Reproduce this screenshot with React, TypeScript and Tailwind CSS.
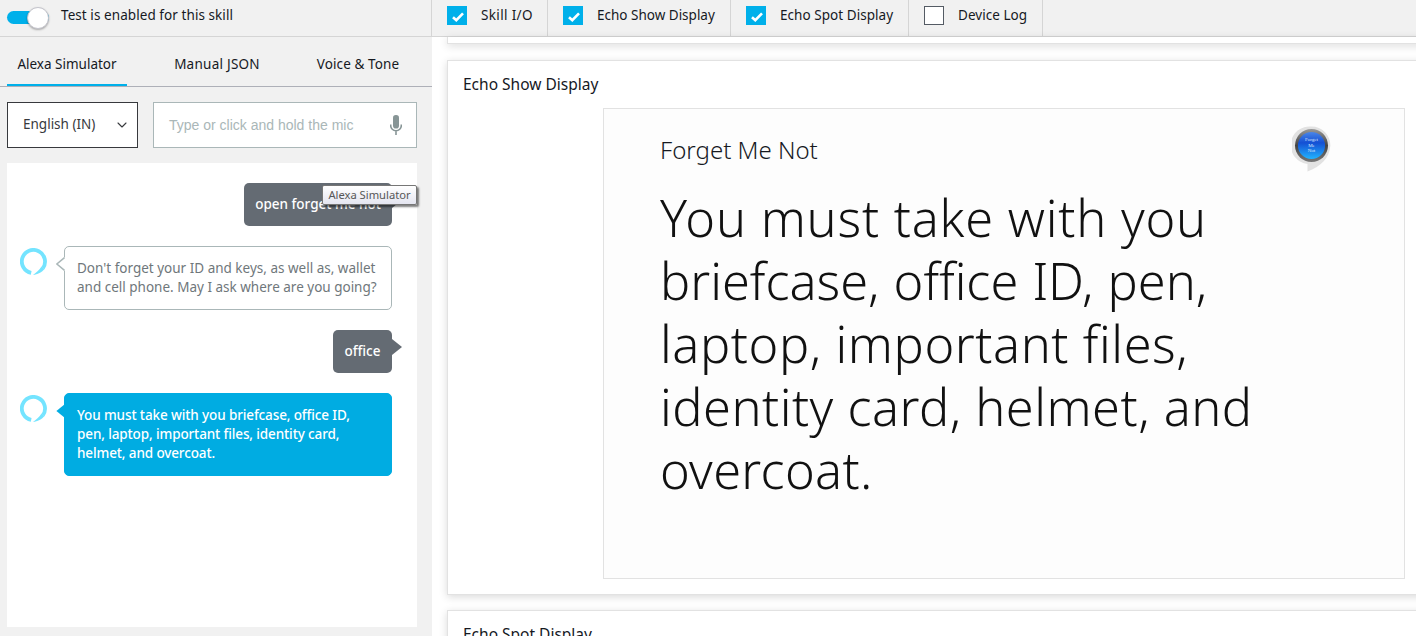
import type { ReactNode } from 'react'
import { ChevronDown } from 'lucide-react'

const panels = [
  { label: 'Skill I/O', checked: true, cell: 'w-[116px]', text: 'tracking-[0.35px]' },
  { label: 'Echo Show Display', checked: true, cell: 'w-[183px]', text: '' },
  { label: 'Echo Spot Display', checked: true, cell: 'w-[178px]', text: 'tracking-[0.05px]' },
  { label: 'Device Log', checked: false, cell: 'w-[134px]', text: 'tracking-[0.05px]' },
]

const displayLines = [
  { text: 'You must take with you', spacing: 'tracking-[0.77px]' },
  { text: 'briefcase, office ID, pen,', spacing: '[word-spacing:1px]' },
  { text: 'laptop, important files,', spacing: 'tracking-[0.58px]' },
  { text: 'identity card, helmet, and', spacing: 'tracking-[0.5px]' },
  { text: 'overcoat.', spacing: 'tracking-[0.33px]' },
]

function Checkbox({ checked }: { checked: boolean }) {
  if (!checked) {
    return <span className="h-[19px] w-5 shrink-0 border border-[#545b64] bg-white" />
  }
  return (
    <span className="flex h-[19px] w-5 shrink-0 items-center justify-center bg-[#00b0ea]">
      <svg className="mt-0.5 ml-0.5 h-2.5 w-3" viewBox="0 0 12 10" fill="none" stroke="#fff" strokeWidth="2.6">
        <path d="M1 5.2 4.3 8.2 11 1.3" />
      </svg>
    </span>
  )
}

function AlexaRing() {
  return (
    <svg className="mt-0.5 h-[27px] w-[27px] shrink-0" viewBox="0 0 27 27" fill="none" stroke="#74e4ff" strokeWidth="3.8">
      <path d="M11.2 24.9A11.6 11.6 0 1 1 22.9 20.2" />
      <path d="M13 27C17.5 26.7 22 24 24.600 21L21.300 18.8C19.5 22 16.5 24.5 13 27z" fill="#74e4ff" stroke="none" />
    </svg>
  )
}

function UserMessage({ className, children }: { className: string; children: ReactNode }) {
  return (
    <div className="flex justify-end">
      <div className={`relative flex h-[43px] items-center justify-center rounded-[5px] bg-[#646b73] text-[13.5px] font-medium whitespace-nowrap text-white ${className}`}>
        {children}
        <svg className="absolute top-2 left-full h-[18px] w-2.5" viewBox="0 0 10 18" fill="#646b73">
          <path d="M0 1 10 9 0 17z" />
        </svg>
      </div>
    </div>
  )
}

function AlexaMessage({ active, lines }: { active?: boolean; lines: string[] }) {
  return (
    <div className="flex justify-end gap-[17px]">
      <AlexaRing />
      <div
        className={`relative w-[328px] rounded-[5px] border px-3 pt-3 pb-3 text-[13.5px] leading-[19px] whitespace-nowrap ${
          active ? 'border-[#00ace2] bg-[#00ace2] font-medium tracking-[-0.12px] text-white' : 'border-[#aab7b8] bg-white text-[#6f777b]'
        }`}
      >
        <svg className="absolute top-2.5 -left-[9px] h-[14px] w-[9px]" viewBox="0 0 9 14" fill={active ? '#00ace2' : '#fff'}>
          <path d="M9 0 .4 7 9 14z" />
          {!active && <path d="M8.5.7.9 7l7.6 6.3" stroke="#aab7b8" strokeWidth="1.5" />}
        </svg>
        {lines.map((line) => (
          <p key={line}>{line}</p>
        ))}
      </div>
    </div>
  )
}

function SkillIcon() {
  return (
    <svg className="absolute top-[16px] right-[72px] h-12 w-10" viewBox="0 0 40 48">
      <defs>
        <linearGradient id="rim" x1="0" y1="0" x2="0" y2="1">
          <stop offset="0" stopColor="#999" />
          <stop offset="0.5" stopColor="#444" />
          <stop offset="1" stopColor="#777" />
        </linearGradient>
        <linearGradient id="glass" x1="0" y1="0" x2="0" y2="1">
          <stop offset="0" stopColor="#4a86e8" />
          <stop offset="0.4" stopColor="#1450d4" />
          <stop offset="1" stopColor="#22b4ff" />
        </linearGradient>
      </defs>
      <path d="M19.500 1.500a18.800 18.800 0 0 1 18.800 19.500C37.500 33 28.500 42 15.500 46.500V39A18.800 18.800 0 0 1 19.500 1.500z" fill="#e2e2e2" />
      <circle cx="19.500" cy="20.500" r="16.500" fill="url(#rim)" />
      <circle cx="19.500" cy="20.500" r="13.600" fill="url(#glass)" />
      <g fill="#dce9ff" fontSize="5" fontFamily="Liberation Serif, serif" textAnchor="middle">
        <text x="19.500" y="15.500">Forget</text>
        <text x="19.500" y="21.500">Me</text>
        <text x="19.500" y="27">Not</text>
      </g>
    </svg>
  )
}

export default function App() {
  return (
    <div className="flex h-[636px] w-[1416px] flex-col overflow-hidden bg-white font-['Noto_Sans','Open_Sans',sans-serif] text-[13.5px] text-[#16191f]">
      <header className="flex h-[37px] shrink-0 border-b border-[#d5d5d5] bg-[#f1f1f1]">
        <div className="flex w-[432px] items-start border-r border-[#d5d5d5] pl-[7px]">
          <div className="mt-[11px] flex h-[13px] w-[42px] items-center justify-end rounded-full bg-[#00b0ea]">
            <span className="h-[22px] w-[22px] shrink-0 rounded-full border border-[#c4c4cc] bg-white shadow-[0_1px_2px_rgba(0,0,0,0.3)]" />
          </div>
          <span className="mt-[5px] ml-3 leading-5 tracking-[0.07px]">Test is enabled for this skill</span>
        </div>
        {panels.map((panel) => (
          <label key={panel.label} className={`flex items-start border-r border-[#d5d5d5] pt-1.5 pl-[15px] ${panel.cell}`}>
            <Checkbox checked={panel.checked} />
            <span className={`-mt-px ml-3.5 leading-5 whitespace-nowrap ${panel.text}`}>{panel.label}</span>
          </label>
        ))}
      </header>

      <div className="flex min-h-0 flex-1">
        <aside className="flex w-[432px] shrink-0 flex-col bg-[#f1f1f1]">
          <nav className="flex h-[50px] shrink-0 items-end border-b border-[#aeb0b8] pl-[7px] leading-5">
            <a className="h-8 w-[120px] border-b-2 border-[#00b0ea] text-center">Alexa Simulator</a>
            <a className="ml-[30px] h-8 w-[120px] text-center tracking-[0.25px]">Manual JSON</a>
            <a className="ml-[21px] h-8 w-[120px] text-center tracking-[0.1px]">Voice &amp; Tone</a>
          </nav>
          <div className="mt-[15px] ml-[7px] flex h-[46px] shrink-0 gap-[15px]">
            <button className="flex w-[131px] items-center justify-between border border-[#37393d] bg-white pr-[7px] pb-px pl-[15px] text-[#37393d]">
              English (IN)
              <ChevronDown className="h-4 w-4" strokeWidth={1.6} />
            </button>
            <div className="flex w-[264px] items-center justify-between border border-[#aab7b8] bg-white pr-3.5 pl-[15px] font-['Liberation_Sans',sans-serif] text-sm text-[#aab7b8]">
              Type or click and hold the mic
              <svg className="h-5 w-3" viewBox="0 0 12 20" fill="none" stroke="#879596">
                <rect x="3" width="6" height="13.500" rx="2.800" fill="#879596" stroke="none" />
                <path d="M.7 9.500v1.200a5.300 5 0 0 0 10.600 0V9.500M6 16V20" strokeWidth="1.600" />
              </svg>
            </div>
          </div>
          <div className="relative mt-[15px] ml-[7px] flex h-[464px] w-[410px] shrink-0 flex-col gap-5 bg-white pt-5 pr-[25px]">
            <UserMessage className="w-[148px]">open forget me not</UserMessage>
            <AlexaMessage lines={["Don't forget your ID and keys, as well as, wallet", 'and cell phone. May I ask where are you going?']} />
            <UserMessage className="w-[59px]">office</UserMessage>
            <AlexaMessage
              active
              lines={['You must take with you briefcase, office ID,', 'pen, laptop, important files, identity card,', 'helmet, and overcoat.']}
            />
            <div className="absolute top-[22px] left-[315px] flex h-5 w-[95px] items-center justify-center rounded-[2px] border border-[#767676] bg-linear-to-b from-white to-[#e4e5f0] text-[11.2px] whitespace-nowrap text-[#575757] shadow-[2px_2px_2px_rgba(0,0,0,0.5)]">
              Alexa Simulator
            </div>
          </div>
        </aside>

        <main className="flex min-w-0 flex-1 flex-col gap-4 pl-[15px]">
          <section className="h-[7px] w-[1000px] shrink-0 border border-t-0 border-[#e2e2e2] shadow-[0_2px_8px_rgba(0,0,0,0.15)]" />
          <section className="h-[535px] w-[1000px] shrink-0 border border-[#e2e2e2] bg-white pt-[13px] pl-[15px] shadow-[0_2px_8px_rgba(0,0,0,0.15)]">
            <h2 className="text-[15.5px] leading-5">Echo Show Display</h2>
            <div className="relative mt-3.5 ml-[140px] h-[471px] w-[802px] border border-[#e2e2e2] bg-[#fdfdfd] pt-[25px] pl-[56px]">
              <h3 className="text-[24px] leading-8 font-light">Forget Me Not</h3>
              <div className="mt-5 text-[50.5px] leading-[63px] font-light whitespace-nowrap text-[#111]">
                {displayLines.map((line) => (
                  <p key={line.text} className={line.spacing}>{line.text}</p>
                ))}
              </div>
              <SkillIcon />
            </div>
          </section>
          <section className="-mt-px h-[100px] w-[1000px] shrink-0 border border-[#e2e2e2] bg-white pt-[13px] pl-[15px] shadow-[0_2px_8px_rgba(0,0,0,0.15)]">
            <h2 className="text-[15.5px] leading-5">Echo Spot Display</h2>
          </section>
        </main>
      </div>
    </div>
  )
}
